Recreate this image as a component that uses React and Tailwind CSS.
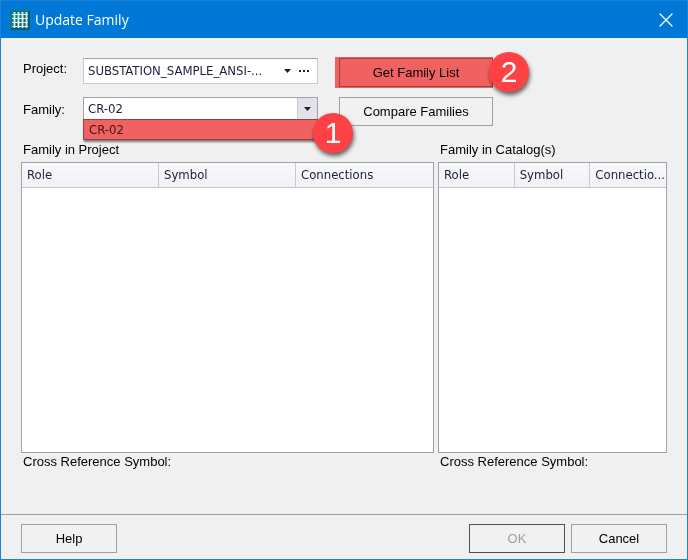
import { X } from "lucide-react";

const buttonClass =
  "h-[29px] border border-[#a0a0a0] bg-[#f1f1f1] text-[13px] text-black";

const AppIcon = () => (
  <svg viewBox="0 0 20 20" className="size-5" aria-hidden="true">
    <rect width="20" height="20" fill="#067c86" />
    <path d="M0 20 20 0v20z" fill="#04616c" />
    <g stroke="#d9f1f0">
      <path d="M4.500 2v16M8.500 2v16M12.500 2v16M16.500 2v16" strokeWidth="1.800" />
      <path d="M2 4.500h16M2 8.500h16M2 12.500h16M2 16.500h16" strokeWidth="1" />
    </g>
    <g fill="#f2fbfb">
      <circle cx="8.500" cy="12.500" r="1.300" />
      <circle cx="12.500" cy="8.500" r="1.300" />
    </g>
  </svg>
);

const Caret = ({ className = "" }) => (
  <svg viewBox="0 0 7 4" className={`h-1 w-[7px] ${className}`} aria-hidden="true">
    <path d="M0 0h7L3.500 4z" fill="#1e1e3c" />
  </svg>
);

const Badge = ({ className, children }) => (
  <span
    className={`absolute z-20 flex size-10 items-center justify-center rounded-full bg-[#fd4144] font-['Liberation_Sans',Arial,sans-serif] text-3xl text-white shadow-[1px_3px_4px_rgba(0,0,0,0.6)] ${className}`}
  >
    {children}
  </span>
);

const FamilyTable = ({ title, className, headers }) => (
  <section className={`flex min-w-0 flex-col ${className}`}>
    <h2 className="pl-0.5 text-[13px] leading-6">{title}</h2>
    <div className="flex-1 border border-[#a0a0af] bg-white">
      <table className="w-full table-fixed border-separate border-spacing-0 font-['DejaVu_Sans_Condensed','Noto_Sans',sans-serif] text-[13px] text-[#1e1e3c]">
        <thead>
          <tr className="h-[25px] bg-linear-to-b from-[#f8f9fa] to-[#f0f1f4]">
            {headers.map((header) => (
              <th
                key={header}
                scope="col"
                className="border-r border-b border-[#c8c8d2] pb-px pl-[5px] text-left font-normal whitespace-nowrap last:border-r-0"
              >
                {header}
              </th>
            ))}
          </tr>
        </thead>
      </table>
    </div>
    <p className="pl-0.5 text-[13px] leading-[18px]">Cross Reference Symbol:</p>
  </section>
);

const App = () => {
  return (
    <div className="flex min-h-screen flex-col border border-[#1883d7] bg-[#f0f0f0] font-['Liberation_Sans',Arial,sans-serif] text-black">
      <header className="flex h-[37px] items-center bg-[#0078d7] px-[9px] text-white">
        <AppIcon />
        <h1 className="ml-[5px] flex-1 font-['Open_Sans','Noto_Sans',sans-serif] text-sm">
          Update Family
        </h1>
        <button aria-label="Close">
          <X className="size-6" strokeWidth={1.2} />
        </button>
      </header>

      <main className="flex flex-1 flex-col px-5 pt-5">
        <div className="grid grid-cols-[62px_235px_175px] gap-y-2.5">
          <label htmlFor="project" className="pl-0.5 text-[13px] leading-[22px]">
            Project:
          </label>
          <div className="relative flex h-[26px] border border-[#c8c8d2] border-t-[#a0a0af] bg-white font-['DejaVu_Sans_Condensed','Noto_Sans',sans-serif] text-[13px] text-[#1e1e3c]">
            <select id="project" className="min-w-0 flex-1 appearance-none pl-1">
              <option>SUBSTATION_SAMPLE_ANSI-...</option>
            </select>
            <Caret className="pointer-events-none absolute top-2.5 right-[26px]" />
            <button aria-label="Browse projects" className="flex w-[22px] items-center gap-0.5 pl-1">
              <span className="size-0.5 bg-[#1e1e3c]" />
              <span className="size-0.5 bg-[#1e1e3c]" />
              <span className="size-0.5 bg-[#1e1e3c]" />
            </button>
          </div>
          <div className="relative ml-[21px]">
            <button className={`w-full ${buttonClass}`}>Get Family List</button>
            <span className="pointer-events-none absolute -top-px right-0 -bottom-px -left-1 bg-[#fe6868] mix-blend-multiply" />
            <Badge className="-top-1.5 -right-9">2</Badge>
          </div>

          <label htmlFor="family" className="pl-0.5 text-[13px] leading-[26px]">
            Family:
          </label>
          <div className="relative h-[26px] font-['DejaVu_Sans_Condensed','Noto_Sans',sans-serif] text-[13px] text-[#1e1e3c]">
            <div className="relative flex h-[23px] border border-[#a0a0af] bg-white">
              <select id="family" className="min-w-0 flex-1 appearance-none pl-1">
                <option>CR-02</option>
              </select>
              <span className="pointer-events-none absolute inset-y-0 right-0 flex w-5 items-center justify-center border-l border-[#c8c8d2] bg-[#e1e3e8]">
                <Caret />
              </span>
            </div>
            <ul
              role="listbox"
              aria-label="Family"
              className="absolute inset-x-0 top-[22px] z-10 h-[21px] border border-[#9b3f43] bg-[#ee6262] shadow-[1px_2px_2px_rgba(0,0,0,0.5)]"
            >
              <li role="option" aria-selected="true" className="pl-[5px] leading-[19px] text-[#46101c]">
                CR-02
              </li>
            </ul>
            <Badge className="top-4 -right-[35px]">1</Badge>
          </div>
          <button className={`ml-[21px] ${buttonClass}`}>Compare Families</button>
        </div>

        <div className="mt-3 flex flex-1 gap-1">
          <FamilyTable
            title="Family in Project"
            className="flex-[413]"
            headers={["Role", "Symbol", "Connections"]}
          />
          <FamilyTable
            title="Family in Catalog(s)"
            className="flex-[229]"
            headers={["Role", "Symbol", "Connectio..."]}
          />
        </div>
      </main>

      <footer className="mt-[43px] flex gap-1.5 border-t border-[#a0a0a0] px-5 pt-[9px] pb-1.5">
        <button className={`mr-auto w-24 ${buttonClass}`}>Help</button>
        <button disabled className="h-[29px] w-24 border border-[#505050] bg-[#f1f1f1] text-[13px] text-[#a0a0a0]">
          OK
        </button>
        <button className={`w-24 ${buttonClass}`}>Cancel</button>
      </footer>
    </div>
  );
};

export default App;
